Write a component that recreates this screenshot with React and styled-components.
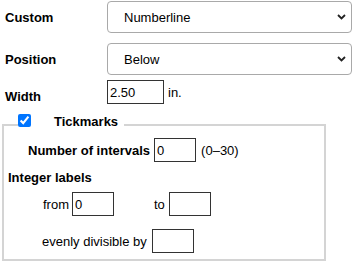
import React from 'react';
import styled, { createGlobalStyle } from 'styled-components';

const GlobalStyle = createGlobalStyle`
    body {
        margin: 0;
        background: #fff;
        color: #000;
        font-family: "Liberation Sans", Arial, sans-serif;
        font-size: 13px;
    }
`;

const Form = styled.div`
    padding-top: 1px;
    width: 352px;
`;

const Row = styled.div`
    display: flex;
    align-items: center;
    height: ${props => props.h || 32}px;
    margin-bottom: ${props => props.mb || 0}px;
`;

const Label = styled.label`
    width: 102px;
    padding-left: 5px;
    font-weight: bold;
    align-self: ${props => props.align || 'center'};
`;

const SelectWrap = styled.div`
    position: relative;
    width: 245px;
    height: 100%;
`;

const Select = styled.select`
    appearance: none;
    width: 100%;
    height: 100%;
    box-sizing: border-box;
    border: 1px solid #a9a9a9;
    border-radius: 4px;
    background: #fff;
    padding: 0 0 0 16px;
    font-family: inherit;
    font-size: 13px;
    color: #000;
`;

const Chevron = styled.svg`
    position: absolute;
    right: 6px;
    top: 50%;
    margin-top: -3px;
    pointer-events: none;
`;

const Input = styled.input`
    box-sizing: border-box;
    width: ${props => props.w || 42}px;
    height: ${props => props.h || 24}px;
    border: 1px solid #333;
    border-radius: 0;
    padding: 0 2px;
    margin: 0;
    font-family: inherit;
    font-size: 13px;
    color: #000;
`;

const Unit = styled.span`
    margin-left: ${props => props.ml || 4}px;
`;

const Fieldset = styled.fieldset`
    box-sizing: border-box;
    width: 324px;
    margin: 10px 0 0 2px;
    border: 2px solid #d4d4d4;
    padding: 0 4px 6px 4px;
    min-width: 0;
`;

const Legend = styled.legend`
    display: flex;
    align-items: flex-start;
    height: 22px;
    padding: 0;
    margin-left: 10px;
    font-weight: bold;
`;

const Check = styled.input`
    width: 13px;
    height: 13px;
    margin: 0;
    accent-color: #0075ff;
`;

const LegendText = styled.span`
    margin-left: 23px;
    margin-right: 6px;
    line-height: 15px;
`;

const SubRow = styled.div`
    display: flex;
    align-items: center;
    height: ${props => props.h || 24}px;
    margin-top: ${props => props.mt || 0}px;
    padding-left: ${props => props.pl || 0}px;
`;

const Bold = styled.span`
    font-weight: bold;
    margin-right: ${props => props.mr || 0}px;
`;

const Text = styled.span`
    margin-right: ${props => props.mr || 4}px;
    margin-left: ${props => props.ml || 0}px;
`;

const ChevronIcon = () => (
    <Chevron width="9" height="6" viewBox="0 0 9 6">
        <path d="M1 1 L4.5 4.5 L8 1" fill="none" stroke="#222" strokeWidth="1.8" />
    </Chevron>
);

const App = () => (
    <Form>
        <GlobalStyle />
        <Row h={32} mb={10}>
            <Label>Custom</Label>
            <SelectWrap>
                <Select defaultValue="Numberline">
                    <option>Numberline</option>
                </Select>
                <ChevronIcon />
            </SelectWrap>
        </Row>
        <Row h={32} mb={5}>
            <Label>Position</Label>
            <SelectWrap>
                <Select defaultValue="Below">
                    <option>Below</option>
                </Select>
                <ChevronIcon />
            </SelectWrap>
        </Row>
        <Row h={24}>
            <Label align="flex-end">Width</Label>
            <Input w={57} defaultValue="2.50" />
            <Unit ml={4}>in.</Unit>
        </Row>
        <Fieldset>
            <Legend>
                <Check type="checkbox" defaultChecked />
                <LegendText>Tickmarks</LegendText>
            </Legend>
            <SubRow pl={20} mt={2}>
                <Bold mr={4}>Number of intervals</Bold>
                <Input defaultValue="0" />
                <Unit ml={5}>(0–30)</Unit>
            </SubRow>
            <SubRow h={15} mt={8}>
                <Bold>Integer labels</Bold>
            </SubRow>
            <SubRow pl={35} mt={7}>
                <Text mr={3}>from</Text>
                <Input defaultValue="0" />
                <Text ml={40}>to</Text>
                <Input />
            </SubRow>
            <SubRow pl={34} mt={13}>
                <Text mr={5}>evenly divisible by</Text>
                <Input />
            </SubRow>
        </Fieldset>
    </Form>
);

export default App;
